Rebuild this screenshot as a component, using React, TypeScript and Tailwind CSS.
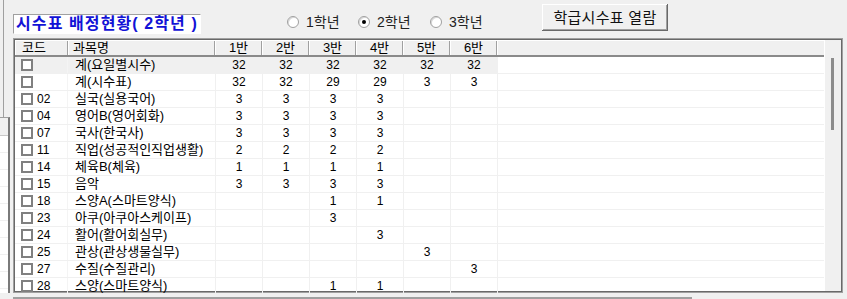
import React from 'react';

type Row = { code: string; name: string; v: string[]; hi?: boolean };

const rows: Row[] = [
  { code: '', name: '계(요일별시수)', v: ['32', '32', '32', '32', '32', '32'], hi: true },
  { code: '', name: '계(시수표)', v: ['32', '32', '29', '29', '3', '3'] },
  { code: '02', name: '실국(실용국어)', v: ['3', '3', '3', '3', '', ''] },
  { code: '04', name: '영어B(영어회화)', v: ['3', '3', '3', '3', '', ''] },
  { code: '07', name: '국사(한국사)', v: ['3', '3', '3', '3', '', ''] },
  { code: '11', name: '직업(성공적인직업생활)', v: ['2', '2', '2', '2', '', ''] },
  { code: '14', name: '체육B(체육)', v: ['1', '1', '1', '1', '', ''] },
  { code: '15', name: '음악', v: ['3', '3', '3', '3', '', ''] },
  { code: '18', name: '스양A(스마트양식)', v: ['', '', '1', '1', '', ''] },
  { code: '23', name: '아쿠(아쿠아스케이프)', v: ['', '', '3', '', '', ''] },
  { code: '24', name: '활어(활어회실무)', v: ['', '', '', '3', '', ''] },
  { code: '25', name: '관상(관상생물실무)', v: ['', '', '', '', '3', ''] },
  { code: '27', name: '수질(수질관리)', v: ['', '', '', '', '', '3'] },
  { code: '28', name: '스양(스마트양식)', v: ['', '', '1', '1', '', ''] },
];

const classes = ['1반', '2반', '3반', '4반', '5반', '6반'];

const Radio = ({ label, checked, w }: { label: string; checked?: boolean; w: string }) => (
  <div className={`flex items-center ${w}`}>
    <span className="w-[12px] h-[12px] rounded-full border border-[#a0a0a0] bg-white flex items-center justify-center shadow-[inset_1px_1px_0_#d8d8d8]">
      {checked && <span className="w-[4px] h-[4px] rounded-full bg-black" />}
    </span>
    <span className="ml-[7px] text-[14px] leading-[14px] text-[#222]">{label}</span>
  </div>
);

const HeadCell = ({ children, w, left }: { children?: React.ReactNode; w: string; left?: boolean }) => (
  <div
    className={`${w} h-full flex items-center border-l border-l-white border-r border-r-[#a0a0a0] ${
      left ? 'justify-start' : 'justify-center'
    }`}
  >
    {children}
  </div>
);

export default function App() {
  return (
    <div className="w-[847px] h-[299px] bg-[#f0f0f0] flex overflow-hidden font-['Liberation_Sans','Noto_Sans_CJK_KR',sans-serif] text-black">
      {/* sliver of the neighbouring panel */}
      <div className="w-[13px] flex flex-col">
        <div className="w-[4px] h-[117px] border-r border-[#a0a0a0]" />
        <div className="w-[10px] h-[176px] bg-white border-t border-[#a0a0a0] border-r-2 border-r-[#7a7a7a] flex flex-col">
          <div className="h-[18px] bg-[#f0f0f0] border-b border-[#c8c8c8]" />
          {Array.from({ length: 9 }).map((_, i) => (
            <div key={i} className="h-[17px] border-b border-[#f0f0f0]" />
          ))}
        </div>
      </div>

      <div className="flex flex-col">
        {/* top bar */}
        <div className="h-[38px] flex items-start">
          <div className="mt-[14px] w-[188px] h-[20px] bg-white border-t border-l border-[#a0a0a0] border-b border-r border-b-white border-r-white flex items-center pl-[2px]">
            <span className="text-[16px] leading-[18px] font-bold text-[#1212d6] tracking-[1.1px] whitespace-nowrap">
              시수표 배정현황( 2학년 )
            </span>
          </div>
          <div className="ml-[86px] mt-[15px] w-[255px] flex">
            <Radio label="1학년" w="w-[71px]" />
            <Radio label="2학년" checked w="w-[72px]" />
            <Radio label="3학년" w="w-[70px]" />
          </div>
          <button className="mt-[4px] w-[126px] h-[27px] bg-[#f0f0f0] shadow-[inset_-1px_-1px_0_#696969,inset_1px_1px_0_#ffffff,inset_-2px_-2px_0_#a0a0a0] flex items-center justify-center text-[15px] leading-[16px] text-[#111] tracking-[0.3px]">
            학급시수표 열람
          </button>
        </div>

        {/* grid */}
        <div className="w-[830px] h-[255px] border border-[#a0a0a0]">
          <div className="w-full h-full border border-[#696969] flex text-[13px]">
            <div className="w-[809px] flex flex-col bg-white">
              <div className="h-[17px] flex bg-[#f0f0f0] border-t border-t-white border-b-2 border-b-[#8a8a8a]">
                <HeadCell w="w-[53px]" left>
                  <span className="pl-[6px]">코드</span>
                </HeadCell>
                <HeadCell w="w-[147px]" left>
                  <span className="pl-[4px]">과목명</span>
                </HeadCell>
                {classes.map((c) => (
                  <HeadCell key={c} w="w-[47px]">
                    {c}
                  </HeadCell>
                ))}
                <div className="flex-1 border-l border-l-white" />
              </div>
              {rows.map((r, i) => (
                <div key={i} className="h-[17px] shrink-0 flex border-b border-[#f0f0f0] leading-[16px]">
                  <div className={`flex ${r.hi ? 'bg-[#f0f0f0]' : ''}`}>
                    <div className="w-[53px] flex items-center pl-[6px] border-r border-[#f4f4f4] text-[12px]">
                      <span className="w-[12px] h-[12px] border-2 border-[#808080] bg-white shrink-0" />
                      <span className="ml-[4px]">{r.code}</span>
                    </div>
                    <div className="w-[148px] flex items-center pl-[7px] border-r border-[#f0f0f0] whitespace-nowrap">
                      {r.name}
                    </div>
                    {r.v.map((x, j) => (
                      <div key={j} className="w-[47px] flex items-center justify-center border-r border-[#f0f0f0] text-[12px]">
                        {x}
                      </div>
                    ))}
                  </div>
                  <div className="flex-1" />
                </div>
              ))}
            </div>
            <div className="w-[17px] bg-[#f0f0f0] border-l border-white">
              <div className="ml-[6px] mt-[18px] w-[3px] h-[72px] bg-[#8c8c8c]" />
            </div>
          </div>
        </div>

        <div className="mt-[4px] w-[679px] border-t-2 border-[#a0a0a0]" />
      </div>
    </div>
  );
}
